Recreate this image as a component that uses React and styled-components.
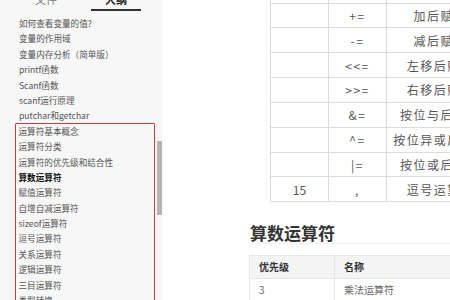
import React from "react";
import styled, { createGlobalStyle } from "styled-components";

const Global = createGlobalStyle`
  html, body { margin: 0; padding: 0; overflow: hidden; background: #fff; }
  body { font-family: "Noto Sans CJK SC", "Noto Sans", sans-serif; }
  #root { width: 450px; height: 300px; overflow: hidden; }
`;

const Page = styled.div`
  display: flex;
  width: 450px;
  height: 300px;
  overflow: hidden;
`;

const Sidebar = styled.aside`
  position: relative;
  flex: 0 0 163px;
  background: #f7f7f7;
  display: flex;
  flex-direction: column;
`;

const Tabs = styled.div`
  display: flex;
  gap: 20px;
  padding-left: 21px;
  margin-top: -11px;
  height: 22px;
`;

const Tab = styled.div`
  width: 50px;
  box-sizing: border-box;
  text-align: center;
  font-size: 11px;
  line-height: 20px;
  color: ${(p) => (p.$active ? "#222" : "#777")};
  font-weight: ${(p) => (p.$active ? 700 : 400)};
  border-bottom: 2px solid ${(p) => (p.$active ? "#333" : "transparent")};
`;

const List = styled.div`
  display: flex;
  flex-direction: column;
  padding: 5px 0 0 19px;
`;

const Item = styled.div`
  font-size: 8.6px;
  line-height: 15.4px;
  height: 15.4px;
  white-space: nowrap;
  color: ${(p) => (p.$bold ? "#111" : "#555")};
  font-weight: ${(p) => (p.$bold ? 700 : 400)};
`;

const Marked = styled.div`
  display: flex;
  flex-direction: column;
  margin: -1px 8px 0 -4px;
  padding-left: 2.5px;
  border: 1.5px solid #d8373c;
  border-radius: 1px;
`;

const Thumb = styled.div`
  position: absolute;
  left: 157px;
  top: 141px;
  width: 5px;
  height: 74px;
  background: #b4b4b4;
`;

const Content = styled.main`
  flex: 1 0 auto;
  display: flex;
  flex-direction: column;
  padding-left: 87px;
  min-width: 400px;
`;

const OpTable = styled.div`
  display: grid;
  grid-template-columns: 58px 58px 108px;
  margin: -22.35px 0 0 20px;
  border-top: 1px solid #dcdcdc;
  border-left: 1px solid #dcdcdc;
  width: max-content;
`;

const OpCell = styled.div`
  box-sizing: border-box;
  height: 24.85px;
  border-right: 1px solid #dcdcdc;
  border-bottom: 1px solid #dcdcdc;
  display: flex;
  align-items: center;
  justify-content: center;
  font-size: 12px;
  color: #555;
  white-space: nowrap;
  letter-spacing: ${(p) => (p.$op ? "1.5px" : "0")};
`;

const Rule = styled.div`
  height: 2px;
  background: #eeeeee;
  margin-top: 10.4px;
  width: 220px;
`;

const Heading = styled.h2`
  margin: 10px 0 0 0;
  font-size: 17px;
  line-height: 20px;
  font-weight: 700;
  color: #333;
  padding-bottom: 0;
  border-bottom: 1px solid #f2f2f2;
  width: 220px;
`;

const DataTable = styled.div`
  display: grid;
  grid-template-columns: 85px 200px;
  margin-top: 11px;
  margin-left: -1px;
  border-top: 1px solid #e6e6e6;
  border-left: 1px solid #e6e6e6;
  width: max-content;
`;

const DataCell = styled.div`
  box-sizing: border-box;
  height: 23px;
  padding-left: 9px;
  display: flex;
  align-items: center;
  font-size: 10px;
  color: ${(p) => (p.$head ? "#333" : "#666")};
  font-weight: ${(p) => (p.$head ? 700 : 400)};
  background: ${(p) => (p.$head ? "#f4f4f4" : "#fff")};
  border-right: 1px solid #e6e6e6;
  border-bottom: 1px solid #e6e6e6;
`;

const topItems = [
  "如何查看变量的值?",
  "变量的作用域",
  "变量内存分析（简单版）",
  "printf函数",
  "Scanf函数",
  "scanf运行原理",
  "putchar和getchar",
];

const markedItems = [
  "运算符基本概念",
  "运算符分类",
  "运算符的优先级和结合性",
  "算数运算符",
  "赋值运算符",
  "自增自减运算符",
  "sizeof运算符",
  "逗号运算符",
  "关系运算符",
  "逻辑运算符",
  "三目运算符",
  "类型转换",
];

const opRows = [
  ["14", "=", "赋值运算符"],
  ["", "+=", "加后赋值"],
  ["", "-=", "减后赋值"],
  ["", "<<=", "左移后赋值"],
  ["", ">>=", "右移后赋值"],
  ["", "&=", "按位与后赋值"],
  ["", "^=", "按位异或后赋值"],
  ["", "|=", "按位或后赋值"],
  ["15", ",", "逗号运算符"],
];

export default function App() {
  return (
    <>
      <Global />
      <Page>
        <Sidebar>
          <Tabs>
            <Tab>文件</Tab>
            <Tab $active>大纲</Tab>
          </Tabs>
          <List>
            {topItems.map((t) => (
              <Item key={t}>{t}</Item>
            ))}
            <Marked>
              {markedItems.map((t) => (
                <Item key={t} $bold={t === "算数运算符"}>
                  {t}
                </Item>
              ))}
            </Marked>
          </List>
          <Thumb />
        </Sidebar>
        <Content>
          <OpTable>
            {opRows.map((r, i) => (
              <React.Fragment key={i}>
                <OpCell>{r[0]}</OpCell>
                <OpCell $op>{r[1]}</OpCell>
                <OpCell $op>{r[2]}</OpCell>
              </React.Fragment>
            ))}
          </OpTable>
          <Rule />
          <Heading>算数运算符</Heading>
          <DataTable>
            <DataCell $head>优先级</DataCell>
            <DataCell $head>名称</DataCell>
            <DataCell>3</DataCell>
            <DataCell>乘法运算符</DataCell>
          </DataTable>
        </Content>
      </Page>
    </>
  );
}
